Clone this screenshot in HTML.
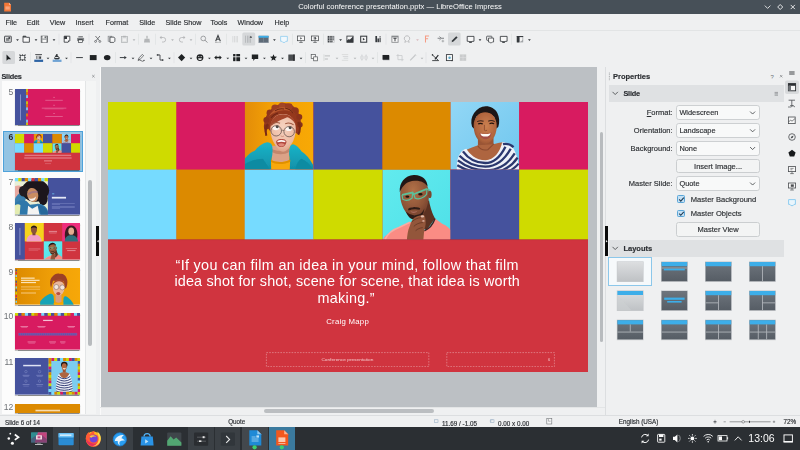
<!DOCTYPE html>
<html>
<head>
<meta charset="utf-8">
<title>Colorful conference presentation.pptx — LibreOffice Impress</title>
<style>
*{box-sizing:border-box;margin:0;padding:0}
html,body{width:800px;height:450px;overflow:hidden;background:#eff0f1;font-family:"Liberation Sans",sans-serif;color:#2c2f33;font-size:7px}
.a{position:absolute;white-space:nowrap}
.t{position:absolute;white-space:nowrap;line-height:10px;height:10px}
.b{font-weight:bold}
.t,.lb,.dt,.bt,.n,.a{opacity:.999}
.t,.lb,.dt,.bt{-webkit-text-stroke-width:0.16px}
#ov{position:absolute;left:0;top:0;width:800px;height:450px}
.dd{position:absolute;left:676.4px;width:83.4px;height:15.100px;background:#f8f9f9;border:0.8px solid #cdd0d2;border-radius:2.800px}
.bt{position:absolute;left:676.4px;width:83.4px;height:14.700px;background:#f3f4f4;border:0.8px solid #cbced0;border-radius:2.500px;text-align:center;line-height:13.700px;font-size:7.5px}
.lb{position:absolute;width:70px;left:602.6px;text-align:right;line-height:10px;height:10px;font-size:7.5px}
.dt{position:absolute;left:679.4px;line-height:10px;height:10px;font-size:7.4px}
.th{position:absolute;left:14.7px;width:65.5px;height:37px;box-shadow:0 0.6px 1px rgba(0,0,0,.45)}
.n{position:absolute;width:13.4px;left:0;text-align:right;font-size:8.6px;line-height:9px;color:#6e7276}
</style>
</head>
<body>
<div class="a" style="left:0;top:0;width:800px;height:14.2px;background:#475058"></div>
<div class="a" style="left:250px;top:0;width:300px;height:14px;line-height:14px;text-align:center;color:#fcfcfc;font-size:7.6px">Colorful conference presentation.pptx — LibreOffice Impress</div>
<div class="t" style="left:5.5px;top:18.4px;font-size:7.2px">File</div>
<div class="t" style="left:26.8px;top:18.4px;font-size:7.2px">Edit</div>
<div class="t" style="left:49.8px;top:18.4px;font-size:7.2px">View</div>
<div class="t" style="left:75.6px;top:18.4px;font-size:7.2px">Insert</div>
<div class="t" style="left:105.5px;top:18.4px;font-size:7.2px">Format</div>
<div class="t" style="left:139.2px;top:18.4px;font-size:7.2px">Slide</div>
<div class="t" style="left:165.5px;top:18.4px;font-size:7.2px">Slide Show</div>
<div class="t" style="left:210.5px;top:18.4px;font-size:7.2px">Tools</div>
<div class="t" style="left:237.5px;top:18.4px;font-size:7.2px">Window</div>
<div class="t" style="left:274.5px;top:18.4px;font-size:7.2px">Help</div>
<div class="a" style="left:0;top:30.2px;width:800px;height:0.7px;background:#e2e4e5"></div>
<div class="t b" style="left:1.5px;top:72px;font-size:7.3px;letter-spacing:-0.25px">Slides</div>
<div class="a" style="left:2px;top:80.6px;width:83px;height:333px;background:#fcfcfc"></div>
<div class="a" style="left:85px;top:80.6px;width:11px;height:333px;background:#f4f5f5;border-left:0.7px solid #e3e5e6"></div>
<div class="a" style="left:87.6px;top:180px;width:4.8px;height:166px;background:#b8bbbe;border-radius:2px"></div>
<div class="a" style="left:3.2px;top:131.4px;width:79.4px;height:40.7px;background:#93c4e3;border:0.9px solid #4ea2da"></div>
<div class="n" style="top:87.9px;color:#6e7276">5</div>
<div class="th" style="top:88.5px;height:36.8px;overflow:hidden"><svg width="65.5" height="36.800" style="display:block"><use href="#s5" width="65.5" height="36.800"/></svg></div>
<div class="n" style="top:133px;color:#2c2f33;font-weight:bold">6</div>
<div class="th" style="top:133.6px;height:36.8px;overflow:hidden"><svg width="65.5" height="36.800" style="display:block"><use href="#s6" width="65.5" height="36.800"/><rect x="9.600" y="20.700" width="46.600" height="1.400" fill="#e27680"/><rect x="9.200" y="23.300" width="47.400" height="1.400" fill="#e27680"/><rect x="29" y="26.200" width="8" height="1.300" fill="#e27680"/><rect x="30" y="29.200" width="6" height="0.900" fill="#da5f6a"/></svg></div>
<div class="n" style="top:177.7px;color:#6e7276">7</div>
<div class="th" style="top:178.3px;height:36.8px;overflow:hidden"><svg width="65.5" height="36.800" style="display:block"><use href="#s7" width="65.5" height="36.800"/></svg></div>
<div class="n" style="top:222.7px;color:#6e7276">8</div>
<div class="th" style="top:223.3px;height:36.8px;overflow:hidden"><svg width="65.5" height="36.800" style="display:block"><use href="#s8" width="65.5" height="36.800"/></svg></div>
<div class="n" style="top:267.7px;color:#6e7276">9</div>
<div class="th" style="top:268.3px;height:36.8px;overflow:hidden"><svg width="65.5" height="36.800" style="display:block"><use href="#s9" width="65.5" height="36.800"/></svg></div>
<div class="n" style="top:312.2px;color:#6e7276">10</div>
<div class="th" style="top:312.8px;height:36.8px;overflow:hidden"><svg width="65.5" height="36.800" style="display:block"><use href="#s10" width="65.5" height="36.800"/></svg></div>
<div class="n" style="top:357.6px;color:#6e7276">11</div>
<div class="th" style="top:358.2px;height:36.8px;overflow:hidden"><svg width="65.5" height="36.800" style="display:block"><use href="#s11" width="65.5" height="36.800"/></svg></div>
<div class="n" style="top:403.4px;color:#6e7276">12</div>
<div class="th" style="top:404px;height:9.4px;overflow:hidden"><svg width="65.5" height="36.800" style="display:block"><use href="#s12" width="65.5" height="36.800"/></svg></div>
<div class="a" style="left:100.9px;top:67.2px;width:495.9px;height:339.6px;background:#bcc0c4"></div>
<div class="a" style="left:99.8px;top:67.2px;width:1.100px;height:348px;background:#fafafa"></div>
<svg class="a" style="left:107.6px;top:101.5px" width="480.4" height="270.100"><use href="#s6" width="480.4" height="270.100"/></svg>
<svg class="a" style="left:107.8px;top:101.6px" width="480" height="269.6" font-family="Liberation Sans, sans-serif" fill="#fff"><text x="67.6" y="168.2" font-size="14.4" textLength="343" lengthAdjust="spacing">“If you can film an idea in your mind, follow that film</text><text x="66.4" y="184.4" font-size="14.4" textLength="345.4" lengthAdjust="spacing">idea shot for shot, scene for scene, that idea is worth</text><text x="209.6" y="200.6" font-size="14.4" textLength="57" lengthAdjust="spacing">making.”</text><text x="218.2" y="221.6" font-size="7.8" textLength="42.6" lengthAdjust="spacing">Craig Mapp</text><rect x="158.4" y="250.6" width="162.4" height="14" fill="none" stroke="#e9a3a8" stroke-width="0.6" stroke-dasharray="1.6 1.2"/><rect x="338.8" y="250.6" width="107.6" height="14" fill="none" stroke="#e9a3a8" stroke-width="0.6" stroke-dasharray="1.6 1.2"/><text x="213.4" y="258.8" font-size="4" fill="#f3c8cb" textLength="52" lengthAdjust="spacingAndGlyphs">Conference presentation</text><text x="440" y="258.8" font-size="4" fill="#f3c8cb">6</text></svg>
<div class="a" style="left:599.6px;top:132.2px;width:3.2px;height:210px;background:#b8bbbe;border-radius:2px"></div>
<div class="a" style="left:264px;top:408.8px;width:170.400px;height:4.700px;background:#bbbec1;border-radius:2.400px"></div>
<div class="a" style="left:100px;top:407.4px;width:505px;height:0.7px;background:#e3e5e6"></div>
<div class="a" style="left:604.8px;top:67px;width:0.8px;height:348px;background:#dcdee0"></div>
<div class="a" style="left:96.4px;top:226.4px;width:3px;height:29.6px;background:#0b0b0b"></div>
<div class="a" style="left:605.2px;top:226.4px;width:2.8px;height:29.6px;background:#0b0b0b"></div>
<div class="t b" style="left:613px;top:72.4px;font-size:7.5px">Properties</div>
<div class="a" style="left:608.8px;top:85.2px;width:175px;height:16.4px;background:#dfe1e3"></div>
<div class="t b" style="left:623.4px;top:89.2px;font-size:7.3px;letter-spacing:-0.2px">Slide</div>
<div class="a" style="left:608.8px;top:240.2px;width:175px;height:16.4px;background:#dfe1e3"></div>
<div class="t b" style="left:623.4px;top:244.2px;font-size:7.5px">Layouts</div>
<div class="lb" style="top:108.3px"><u>F</u>ormat:</div>
<div class="dd" style="top:105.2px"></div>
<div class="dt" style="top:108.3px">Widescreen</div>
<div class="lb" style="top:126.1px">Orientation:</div>
<div class="dd" style="top:123px"></div>
<div class="dt" style="top:126.1px">Landscape</div>
<div class="lb" style="top:143.8px">Background:</div>
<div class="dd" style="top:140.7px"></div>
<div class="dt" style="top:143.8px">None</div>
<div class="bt" style="top:158.8px">Insert Image...</div>
<div class="lb" style="top:179.3px">Master Slide:</div>
<div class="dd" style="top:176.2px"></div>
<div class="dt" style="top:179.3px">Quote</div>
<div class="bt" style="top:222.300px">Master View</div>
<div class="a" style="left:677.4px;top:195.4px;width:7.8px;height:7.8px;background:#c4e0f4;border:0.8px solid #5aa6d8;border-radius:1.4px"></div>
<div class="t" style="left:690.8px;top:194.6px;font-size:7.55px">Master Background</div>
<div class="a" style="left:677.4px;top:209.6px;width:7.8px;height:7.8px;background:#c4e0f4;border:0.8px solid #5aa6d8;border-radius:1.4px"></div>
<div class="t" style="left:690.8px;top:208.8px;font-size:7.55px">Master Objects</div>
<div class="a" style="left:608.4px;top:256.6px;width:44px;height:29px;background:#f6f9fb;border:0.8px solid #8cc7ea"></div>
<div class="a" style="left:0;top:415.2px;width:800px;height:0.7px;background:#dcdee0"></div>
<div class="t" style="left:5px;top:417.5px;font-size:6.3px">Slide 6 of 14</div>
<div class="t" style="left:228.2px;top:417.4px;font-size:6.3px">Quote</div>
<div class="t" style="left:442px;top:418.9px;font-size:6.3px">11.69 / -1.05</div>
<div class="t" style="left:498px;top:418.9px;font-size:6.3px">0.00 x 0.00</div>
<div class="t" style="left:618.8px;top:417.2px;font-size:6.3px">English (USA)</div>
<div class="t" style="left:783.4px;top:417.2px;font-size:6.3px">72%</div>
<div class="a" style="left:0;top:427px;width:800px;height:23px;background:#2b2f33"></div>
<div class="a" style="left:53px;top:427px;width:26.4px;height:23px;background:#3b4045"></div>
<div class="a" style="left:80px;top:427px;width:26.2px;height:23px;background:#3b4045"></div>
<div class="a" style="left:106.8px;top:427px;width:25.8px;height:23px;background:#3b4045"></div>
<div class="a" style="left:188px;top:427px;width:25.6px;height:23px;background:#3b4045"></div>
<div class="a" style="left:214.6px;top:427px;width:25.8px;height:23px;background:#3b4045"></div>
<div class="a" style="left:241.6px;top:427px;width:26.4px;height:23px;background:#43484d"></div>
<div class="a" style="left:269px;top:427px;width:26.2px;height:23px;background:#3b7a9e"></div>
<div class="t" style="left:748.300px;top:431.8px;font-size:10.5px;line-height:13px;height:13px;color:#fcfcfc;-webkit-text-stroke-width:0">13:06</div>
<svg id="ov" viewBox="0 0 800 450">
<defs>
<linearGradient id="gBlank" x1="0" x2="0" y1="0" y2="1"><stop offset="0" stop-color="#dcdee0"/><stop offset="1" stop-color="#bfc2c5"/></linearGradient>
<linearGradient id="gDark" x1="0" x2="0" y1="0" y2="1"><stop offset="0" stop-color="#6e757d"/><stop offset="1" stop-color="#565d65"/></linearGradient>
<linearGradient id="gOr9" x1="0" x2="1" y1="0" y2="0"><stop offset="0" stop-color="#dc8a00"/><stop offset="0.6" stop-color="#f0a008"/><stop offset="1" stop-color="#f7a808"/></linearGradient>
<filter id="bl7" x="-5%" y="-5%" width="110%" height="110%"><feGaussianBlur stdDeviation="3"/></filter>

<filter id="bl" x="-10%" y="-10%" width="120%" height="120%"><feGaussianBlur stdDeviation="0.55"/></filter>
<filter id="bl2" x="-10%" y="-10%" width="120%" height="120%"><feGaussianBlur stdDeviation="1.1"/></filter>
<linearGradient id="gOr" x1="0" x2="1" y1="0" y2="0"><stop offset="0" stop-color="#e38c08"/><stop offset="0.35" stop-color="#f29f06"/><stop offset="1" stop-color="#f8a905"/></linearGradient>
<linearGradient id="gBl" x1="0" x2="1" y1="0" y2="1"><stop offset="0" stop-color="#92d7f6"/><stop offset="1" stop-color="#6fc6ee"/></linearGradient>
<linearGradient id="gCy" x1="0" x2="1" y1="0" y2="1"><stop offset="0" stop-color="#62ebee"/><stop offset="1" stop-color="#4fe0e8"/></linearGradient>
<linearGradient id="gTeal" x1="0" x2="0" y1="0" y2="1"><stop offset="0" stop-color="#1cb4c8"/><stop offset="1" stop-color="#1090a8"/></linearGradient>
<radialGradient id="gSk1" cx="0.5" cy="0.35" r="0.7"><stop offset="0" stop-color="#f6d2c0"/><stop offset="0.7" stop-color="#ecbba3"/><stop offset="1" stop-color="#d99c82"/></radialGradient>
<radialGradient id="gSk2" cx="0.55" cy="0.45" r="0.65"><stop offset="0" stop-color="#cb8050"/><stop offset="0.7" stop-color="#b0643d"/><stop offset="1" stop-color="#8a4a2e"/></radialGradient>
<radialGradient id="gSk3" cx="0.45" cy="0.3" r="0.75"><stop offset="0" stop-color="#b27148"/><stop offset="0.6" stop-color="#8f5538"/><stop offset="1" stop-color="#6a3a28"/></radialGradient>
<symbol id="ph1" viewBox="0 0 68 68" preserveAspectRatio="none">
<rect width="68" height="68" fill="url(#gOr)"/>
<g filter="url(#bl)">
<path d="M21 33c-2 -4 -2.5 -9 -1.5 -13c0.6 -4 2.5 -8 5.5 -11c3 -4 8 -7 13 -7.6c5 -0.6 9 1 12 5c3 3 5 8 5.6 13c0.4 5 -0.6 10 -2.6 13l-4 -2l-1 -14l-24 -1z" fill="#95391f"/>
<ellipse cx="37.6" cy="19" rx="16.4" ry="15.6" fill="#95391f"/>
<circle cx="25" cy="11" r="3.4" fill="#8f361d"/><circle cx="30" cy="6" r="3.6" fill="#9b3e22"/><circle cx="37" cy="3.800" r="3.400" fill="#a34526"/><circle cx="44" cy="4.600" r="3.400" fill="#9b3e22"/><circle cx="50" cy="9" r="3.600" fill="#8f361d"/><circle cx="54" cy="15" r="3" fill="#8a331b"/><circle cx="21.500" cy="18" r="3" fill="#8a331b"/><circle cx="21.600" cy="25" r="2.600" fill="#84301a"/><circle cx="54.600" cy="23" r="2.800" fill="#84301a"/>
<path d="M24 14c3 -5 8 -8.600 14 -9c5 0 9 3 11.600 7c-3 -2.600 -7 -4 -11 -3.600c-6 0.400 -10 2.400 -14.600 5.600z" fill="#b9582e"/>
<path d="M30 9q4 -3 9 -2M40 6q5 1 8 5M26 16q3 -4 7 -5" stroke="#6e2713" stroke-width="1" fill="none"/>
<path d="M23 22c-2 3 -2.6 8 -1.6 12M53 20c2 4 2 9 0 13" stroke="#7a2c16" stroke-width="2" fill="none"/>
<path d="M27 44h17v15c-4 3 -13 3 -17 0z" fill="#dba287"/>
<path d="M27 47c4 3 12 3 17 -0.6v4c-5 3 -12 3 -17 0z" fill="#c4866c"/>
<path d="M25.4 27c0 -9 5 -15 12.6 -15c7.6 0 12.6 6 12.6 15c0 6 -1.6 11.6 -4.6 16c-2.4 4 -5 7 -8 7c-3 0 -5.6 -3 -8 -7c-3 -4.4 -4.600 -10 -4.600 -16z" fill="url(#gSk1)"/>
<path d="M25 25c1 -8 6 -12.600 13 -12.600c7 0 12 4 13 11.600c-2 -5 -6 -8 -9 -8.600c-4 2 -10 3.600 -17 9.600z" fill="#a3452a"/>
<ellipse cx="30.8" cy="26" rx="3.3" ry="2.4" fill="#fbf6f3"/><ellipse cx="43.6" cy="26.8" rx="3.2" ry="2.4" fill="#fbf6f3"/>
<circle cx="32.2" cy="25" r="1.5" fill="#4a4744"/><circle cx="45" cy="25.8" r="1.5" fill="#4a4744"/>
<path d="M26.600 22.600q4 -3 8.400 -1.200M40 22q4.400 -2 8.400 1" stroke="#a05a40" stroke-width="1" fill="none"/>
<circle cx="31.2" cy="29" r="5.2" fill="none" stroke="#6a564f" stroke-width="0.8"/><circle cx="44" cy="29.8" r="5.2" fill="none" stroke="#6a564f" stroke-width="0.8"/>
<path d="M36.4 28.800q1.200 -0.800 2.400 0" stroke="#6a564f" stroke-width="0.7" fill="none"/>
<path d="M35.600 34q1.400 1.400 3.400 0.200" stroke="#cf927a" stroke-width="0.9" fill="none"/>
<path d="M31 40c1 -2.200 3 -3 5.200 -2.600c2.200 -0.400 4.200 0.400 5.200 2.400c-0.400 3.200 -2.400 5.600 -5.200 5.600c-2.800 0 -4.800 -2.400 -5.200 -5.400z" fill="#b24a3f"/>
<path d="M32.200 39.200q4 -1.800 8.200 0l-0.400 1.400q-3.600 -1 -7.400 0z" fill="#fdf8f5"/>
<path d="M33 42.400q3.200 -1.600 6.600 0q-1 2.400 -3.300 2.400q-2.300 0 -3.300 -2.400z" fill="#e08a7c"/>
<path d="M0 57c3 -4 7 -7 10 -8c3 -4 8 -7.600 12 -8.400c3 0 4.600 1.400 5.200 3.600c0.800 4 0.400 9 -0.800 13.800l1.200 10h-27.600z" fill="url(#gTeal)"/>
<path d="M0 68v-5c6 -4 12 -6 18 -6l7 11z" fill="#0e8ba2"/>
<path d="M44 68l0.400 -12c-0.800 -4 -0.600 -8 0.400 -10.800c1 -2.600 3 -3.200 5 -2c3 1.600 5 4 6.600 6.600c4 2.600 8 7 11.600 14v4.200z" fill="url(#gTeal)"/>
<path d="M50 68c1 -5 3 -9 6 -11c5 2 9 6 12 11z" fill="#0e8ba2"/>
<path d="M26.200 68l-0.200 -9.600c5 2.600 13 2.600 19 -0.400l-0.400 10z" fill="#f8a808"/>
<path d="M26 58.400c5 2.600 13 2.600 19 -0.400v2c-6 3 -14 3 -19 0.400z" fill="#e09000"/>
</g>
</symbol>
<symbol id="ph2" viewBox="0 0 68 68" preserveAspectRatio="none">
<rect width="68" height="68" fill="url(#gBl)"/>
<g filter="url(#bl)">
<path d="M21.400 25c-1.400 -5 -0.800 -10 2 -14c3 -4 7 -6.400 11.600 -6.600c5 0 9 2.400 11.400 6.600c2 4 2.400 9 1 14l-2 2l-2 -13l-18 0l-2 13z" fill="#1f1513"/>
<path d="M27.200 36h15.400v12h-15.400z" fill="#9a5535"/>
<path d="M23 24c0 -8.400 4.600 -14.200 11.400 -14.200c6.800 0 11.400 5.800 11.400 14.200c0 6 -1.600 10.600 -4.400 14c-2 2.600 -4.400 4.200 -7 4.200c-2.600 0 -5 -1.600 -7 -4.200c-2.800 -3.400 -4.400 -8 -4.400 -14z" fill="url(#gSk2)"/>
<path d="M22.600 21c0.600 -7.600 5 -12 11.800 -12c6.800 0 11 4.400 11.800 11.600c-2 -6.400 -5.600 -10.200 -11.800 -10.200c-6.200 0 -9.800 4 -11.800 10.600z" fill="#1f1513"/>
<path d="M26.400 19.800q3.200 -1.800 6.400 -0.400M37.400 19.400q3.200 -1.600 6.400 0.400" stroke="#3a221a" stroke-width="1" fill="none"/>
<path d="M27.400 22.200q2.200 -1.400 4.600 0M38.600 22q2.200 -1.400 4.600 0" stroke="#24140f" stroke-width="1.100" fill="none"/>
<path d="M33.600 23v5.400q1.200 1 2.600 0" stroke="#8a4a2e" stroke-width="0.800" fill="none"/>
<path d="M28.600 31.200q6 1.800 12.200 -0.200q-0.800 6.400 -6 6.400q-5.400 0 -6.200 -6.200z" fill="#a44f45"/>
<path d="M29.600 31.600q5.200 1.400 10.200 -0.200q-0.800 3.400 -5 3.400q-4.400 0 -5.200 -3.200z" fill="#fefaf7"/>
<path d="M14 49c5 -2.600 10 -4.600 13.400 -5.600l15 -1c4 -1 8 -2 10 -2l0 8l-10 12h-20z" fill="#ae6540"/>
<path d="M27 44c2 3 6 5 10 4l6 -6" stroke="#8a4a2e" stroke-width="1" fill="none"/>
<path d="M6.400 68c-0.400 -6 0.400 -12 3 -16c2 -3 4 -4.400 6.400 -5c3 5 9 11.600 19 11.600c8 0 14.400 -8 16.400 -18c3 -0.400 6 0.600 8.600 3c4 4 7 12 8.200 24.400z" fill="#eef1f8"/>
<g fill="none" stroke="#2c376e" stroke-width="2.300">
<path d="M12.400 49.600q8 11.400 22 11.800q12 0 20 -16.400"/>
<path d="M9 54q10 10.600 25.600 11q15 0 25 -18"/>
<path d="M7.400 58.800q12 9.600 27.600 10q18 0 28.600 -17"/>
<path d="M6.800 63.600q8 5 16 6.400M48 70q12 -4 18.400 -14"/>
<path d="M57 70q7 -3.400 10.400 -8"/>
<path d="M52 42.400q6 -1.400 10.400 3"/>
</g>
</g>
</symbol>
<symbol id="ph3" viewBox="0 0 68 68" preserveAspectRatio="none">
<rect width="68" height="68" fill="url(#gCy)"/>
<g filter="url(#bl)">
<path d="M40 34l6.600 -4c1.400 8 3.400 13 6 17.600l-7.600 10.400h-6z" fill="#5c3222"/>
<path d="M0 70c0.600 -3 2 -5 4.600 -6.600l12 -7l12 -5.400c4 4 10 6 14 8c4 -2 8 -6 10 -11.400l7.600 5.400c4 1.600 7 4 7.800 6v11z" fill="#fa8c84"/>
<path d="M2.600 68c3 -6 9 -10 14 -11.600l11 -5" stroke="#fcaaa2" stroke-width="1.600" fill="none"/>
<path d="M52.600 47.600c-2 6 -6 10 -10.600 12" stroke="#3a2626" stroke-width="1.400" fill="none"/>
<path d="M17.800 25c-0.600 -9 5 -16 14 -16.400c8 -0.400 14 5 14.600 13c0.400 5 -0.200 10 -1.800 14.600c-1.600 5 -4.600 9 -8 11c-2.600 1.400 -6 1.200 -8.600 -0.800c-3.600 -2.800 -6.600 -7 -8.400 -12c-1 -3 -1.600 -6 -1.800 -9.400z" fill="url(#gSk3)"/>
<ellipse cx="47.400" cy="24.200" rx="1.800" ry="3.600" fill="#7a462f"/>
<path d="M17.400 22c-0.800 -9 5 -16 14 -16.600c8 -0.400 13.600 4.600 13.800 11.200c-3 -4 -7 -6 -13.200 -5.600c-7 0.400 -11.400 4 -14.600 11z" fill="#241714"/>
<path d="M25.600 38.400q2 -1.600 4.400 -1.400q1.600 -0.800 3.200 -0.200q2.400 -0.400 4.600 1l-0.600 1.400q-5.400 -1.400 -11 0.600z" fill="#2e1c17"/>
<path d="M28 40.400q3.200 1.400 7 -0.200q-0.600 2 -3.400 2.200q-2.800 0.200 -3.600 -2z" fill="#a86a5c"/>
<path d="M23.600 41c1.400 4 4 7 8 7.600c4 0.400 7.600 -2 9.600 -7l0.800 -4c-1 3 -3 5 -5 6l-5 1.200l-5 -1.400z" fill="#2e1c17"/>
<path d="M19.600 24.600l10.600 -2.200l1 1.600l13.400 -5.200" fill="none" stroke="#5cc09a" stroke-width="1.700"/>
<path d="M19.600 24.600l0.800 4.400c2.400 1.400 6.400 1 9.400 -1.400l0.400 -5.200" fill="none" stroke="#5cc09a" stroke-width="1.200"/>
<path d="M31.400 23.800l1.200 4c3.400 1.600 9 0 11.600 -3.600l0.400 -5.400" fill="none" stroke="#5cc09a" stroke-width="1.200"/>
<path d="M44.600 18.800l3.400 1.600" stroke="#5cc09a" stroke-width="1.300"/>
<ellipse cx="25" cy="26.400" rx="2" ry="1.100" fill="#1e1310"/><ellipse cx="38" cy="24" rx="2.200" ry="1.200" fill="#1e1310"/>
<path d="M24.400 70c0.400 -6 1 -11 3 -15c1 -3 2 -6 4.400 -8c2.400 -1.600 5 -2.400 7.600 -2.600c2.600 -0.200 3.600 1 3.400 2.600c1 4 0.600 8 -1 12l-1 11z" fill="#93573a"/>
<path d="M29.600 51c2.400 -2.600 5.600 -4 9 -4M31.400 55.400c2.400 -2.400 5.400 -3.600 9 -3.800M33.200 59.600c2 -1.800 4.400 -2.800 7.200 -3" stroke="#6a3a28" stroke-width="0.900" fill="none"/>
<ellipse cx="40" cy="45.600" rx="1.800" ry="1.200" fill="#e6c0b0"/><ellipse cx="41" cy="50" rx="1.200" ry="0.900" fill="#d8a898"/>
</g>
</symbol>

<symbol id="ph1w" viewBox="0 0 68 68" preserveAspectRatio="none">
<path d="M22 30c-3 -8 -3 -18 3 -23c4 -5 10 -7 15 -5c6 -1 11 3 13 8c3 5 2 13 0 19c-1 3 -3 3 -4 0l-1 -12l-22 -1z" fill="#9c4126"/>
<path d="M31 44h12v14c-3 3 -9 3 -12 0z" fill="#d99d80"/>
<ellipse cx="37.2" cy="30" rx="11.6" ry="15.5" fill="#e9b79c"/>
<path d="M26 24c2 -8 8 -11 13 -11c6 0 9 4 10 10c-3 -4 -7 -6 -11 -6c-5 0 -9 3 -12 7z" fill="#a84a2a"/>
<circle cx="32.6" cy="28.4" r="5" fill="#f3e6de" stroke="#5a463f" stroke-width="0.8"/><circle cx="44.6" cy="29.2" r="5" fill="#f3e6de" stroke="#5a463f" stroke-width="0.8"/>
<ellipse cx="36.6" cy="41.6" rx="4.2" ry="3.2" fill="#b9503f"/>
<path d="M-6 68c4 -12 16 -22 26 -26c4 -1 6 1 7 5l2 21z" fill="#17a3b6"/>
<path d="M46 68l1 -17c1 -4 4 -5 7 -3c6 4 11 10 14 17v3z" fill="#17a3b6"/>
<path d="M28 68l-1 -8c6 2 14 2 20 -1l-1 9z" fill="#f6a800"/>
</symbol>
<symbol id="s6" viewBox="0 0 480.4 269.8" preserveAspectRatio="none"><rect width="480.4" height="269.8" fill="#d0343f"/><rect y="137" width="480.4" height="0.9" fill="#b52a35"/><rect x="0" y="0" width="68.6" height="67.8" fill="#cfdb00"/><rect x="68.4" y="0" width="68.5" height="67.8" fill="#d81b60"/><rect x="205.4" y="0" width="69.2" height="67.8" fill="#45529d"/><rect x="274.4" y="0" width="68.2" height="67.8" fill="#dc8a00"/><rect x="411.2" y="0" width="69.4" height="67.8" fill="#d81b60"/><rect x="0" y="67.5" width="68.6" height="69.7" fill="#76dbff"/><rect x="68.4" y="67.5" width="68.5" height="69.7" fill="#dc8a00"/><rect x="136.7" y="67.5" width="68.9" height="69.7" fill="#76dbff"/><rect x="205.4" y="67.5" width="69.2" height="69.7" fill="#cfdb00"/><rect x="342.4" y="67.5" width="69" height="69.7" fill="#45529d"/><rect x="411.2" y="67.5" width="69.4" height="69.7" fill="#cfdb00"/><use href="#ph1" x="136.7" y="0" width="68.7" height="67.5"/><use href="#ph2" x="342.4" y="0" width="68.8" height="67.5"/><use href="#ph3" x="274.4" y="67.5" width="68" height="69.7"/></symbol>
<symbol id="s5" viewBox="0 0 480 270" preserveAspectRatio="none"><rect width="480" height="270" fill="#d81b60"/><rect width="82" height="270" fill="#45529d"/><rect x="82" y="0" width="12" height="22.5" fill="#cfdb00"/><rect x="82" y="22.5" width="12" height="22.5" fill="#dc8a00"/><rect x="82" y="45" width="12" height="22.5" fill="#76dbff"/><rect x="82" y="67.5" width="12" height="22.5" fill="#d81b60"/><rect x="82" y="90" width="12" height="22.5" fill="#cfdb00"/><rect x="82" y="112.5" width="12" height="22.5" fill="#dc8a00"/><rect x="82" y="135" width="12" height="22.5" fill="#76dbff"/><rect x="82" y="157.5" width="12" height="22.5" fill="#45529d"/><rect x="82" y="180" width="12" height="22.5" fill="#dc8a00"/><rect x="82" y="202.5" width="12" height="22.5" fill="#d81b60"/><rect x="82" y="225" width="12" height="22.5" fill="#76dbff"/><rect x="82" y="247.5" width="12" height="22.5" fill="#cfdb00"/><rect x="37" y="40" width="6" height="190" fill="#aab1e0" opacity="0.8"/><rect x="283" y="58" width="6" height="6" fill="#f3b9cd"/><rect x="283" y="116" width="6" height="6" fill="#f3b9cd"/><rect x="283" y="176" width="6" height="6" fill="#f3b9cd"/><rect x="222" y="80" width="128" height="4" fill="#ea8db0"/><rect x="196" y="138" width="180" height="4" fill="#ea8db0"/><rect x="216" y="145" width="140" height="3" fill="#e676a0"/><rect x="222" y="198" width="128" height="4" fill="#ea8db0"/></symbol><symbol id="s7" viewBox="0 0 480 270" preserveAspectRatio="none"><rect width="480" height="270" fill="#45529d"/><g filter="url(#bl7)"><rect width="241" height="270" fill="#e9efd6"/><path d="M0 60c20 -10 40 -6 56 6l10 30l-30 40l-36 10z" fill="#e8a9a0"/><path d="M0 150c10 -20 30 -44 60 -50l30 20l-20 60l-70 40z" fill="#3a7fae"/><ellipse cx="150" cy="92" rx="100" ry="82" fill="#1c181b"/><ellipse cx="64" cy="96" rx="36" ry="40" fill="#231e20"/><ellipse cx="206" cy="150" rx="34" ry="50" fill="#1c181b"/><ellipse cx="130" cy="124" rx="40" ry="52" fill="#c98c62" transform="rotate(-16 130 124)"/><path d="M92 112q36 -26 76 -16l-2 14q-34 -8 -68 16z" fill="#8a6a9a" opacity="0.55"/><path d="M100 146q26 18 54 -10q-4 30 -28 32q-20 0 -26 -22z" fill="#f7efea"/><path d="M0 270v-84c24 -22 60 -30 86 -16l24 26l50 -6c40 -4 70 20 81 50v30z" fill="#2f78aa"/><path d="M0 270v-70c14 -10 30 -10 40 0l-6 70z" fill="#e3ebb0"/><path d="M96 204l30 22l40 -22l14 66h-90z" fill="#f4f4f2"/><path d="M170 200c30 0 56 20 71 50v20h-50z" fill="#27689a"/></g><rect x="0" y="0" width="24.4" height="24" fill="#76dbff"/><rect x="24.1" y="0" width="24.4" height="24" fill="#cfdb00"/><rect x="48.2" y="0" width="24.4" height="24" fill="#45529d"/><rect x="72.3" y="0" width="24.4" height="24" fill="#dc8a00"/><rect x="96.4" y="0" width="24.4" height="24" fill="#76dbff"/><rect x="120.5" y="0" width="24.4" height="24" fill="#d0343f"/><rect x="144.6" y="0" width="24.4" height="24" fill="#45529d"/><rect x="168.7" y="0" width="24.4" height="24" fill="#dc8a00"/><rect x="192.8" y="0" width="24.4" height="24" fill="#76dbff"/><rect x="216.9" y="0" width="24.4" height="24" fill="#cfdb00"/><rect x="272" y="114" width="16" height="5" fill="#76dbff"/><rect x="270" y="138" width="104" height="13" fill="#e6e9f6"/><rect x="270" y="186" width="168" height="3.6" fill="#7f8ac8"/><rect x="270" y="194" width="60" height="3.6" fill="#7f8ac8"/><rect x="270" y="206" width="168" height="3.6" fill="#7f8ac8"/><rect x="270" y="214" width="168" height="3.6" fill="#7f8ac8"/><rect x="270" y="222" width="60" height="3.6" fill="#7f8ac8"/></symbol><symbol id="s8" viewBox="0 0 480 270" preserveAspectRatio="none"><rect width="480" height="270" fill="#d0343f"/><rect width="72" height="270" fill="#45529d"/><rect x="33" y="36" width="6" height="200" fill="#aab1e0" opacity="0.800"/><g filter="url(#bl7)"><rect x="72" y="0" width="139" height="135" fill="#f5d21c"/><path d="M84 135c2 -34 22 -52 54 -52c32 0 54 18 58 52z" fill="#f2a0c4"/><rect x="128" y="66" width="22" height="24" fill="#7a4730"/><ellipse cx="139" cy="48" rx="22" ry="29" fill="#8a5338"/><path d="M116 42c-2 -30 48 -30 46 0c-10 -12 -36 -12 -46 0z" fill="#231815"/></g><g filter="url(#bl7)"><rect x="346" y="0" width="134" height="135" fill="#ee2f7c"/><path d="M372 128c-18 -56 0 -110 40 -110c42 0 54 54 40 110z" fill="#3a1d22"/><ellipse cx="412" cy="60" rx="21" ry="27" fill="#e6ad90"/><path d="M364 135c2 -32 20 -46 48 -46c28 0 46 14 50 46z" fill="#2f6f7c"/></g><rect x="211" y="135" width="135" height="135" fill="#4fe0e8"/><use href="#ph3" x="211" y="135" width="135" height="135"/><rect x="248" y="58" width="60" height="11" fill="#e27f89"/><rect x="252" y="76" width="52" height="4" fill="#dc6670"/><rect x="100" y="188" width="86" height="5" fill="#e48993"/><rect x="100" y="200" width="70" height="4" fill="#dc6670"/><rect x="372" y="186" width="82" height="5" fill="#e48993"/><rect x="382" y="198" width="62" height="8" fill="#e27f89"/></symbol><symbol id="s9" viewBox="0 0 480 270" preserveAspectRatio="none"><rect width="480" height="270" fill="url(#gOr9)"/><rect x="4" y="10" width="10" height="14" fill="#45529d"/><rect x="4" y="31" width="10" height="14" fill="#d81b60"/><rect x="4" y="52" width="10" height="14" fill="#76dbff"/><rect x="4" y="73" width="10" height="14" fill="#cfdb00"/><rect x="4" y="94" width="10" height="14" fill="#45529d"/><rect x="4" y="115" width="10" height="14" fill="#d81b60"/><rect x="4" y="136" width="10" height="14" fill="#76dbff"/><rect x="4" y="157" width="10" height="14" fill="#45529d"/><rect x="4" y="178" width="10" height="14" fill="#cfdb00"/><rect x="4" y="199" width="10" height="14" fill="#d81b60"/><rect x="4" y="220" width="10" height="14" fill="#45529d"/><rect x="4" y="241" width="10" height="14" fill="#76dbff"/><rect x="44" y="70" width="100" height="9" fill="#fbe3b8"/><rect x="44" y="86" width="136" height="9" fill="#fbe3b8"/><rect x="44" y="102" width="110" height="9" fill="#fbe3b8"/><rect x="44" y="134" width="140" height="4" fill="#f5c676"/><rect x="44" y="144" width="140" height="4" fill="#f5c676"/><rect x="44" y="154" width="140" height="4" fill="#f5c676"/><rect x="44" y="176" width="110" height="4" fill="#f5c676"/><rect x="44" y="186" width="110" height="4" fill="#f5c676"/><use href="#ph1w" x="184" y="36" width="248" height="248"/></symbol><symbol id="s10" viewBox="0 0 480 270" preserveAspectRatio="none"><rect width="480" height="270" fill="#d81b60"/><rect x="0" y="0" width="24" height="20" fill="#cfdb00"/><rect x="24" y="0" width="24" height="20" fill="#45529d"/><rect x="48" y="0" width="24" height="20" fill="#dc8a00"/><rect x="72" y="0" width="24" height="20" fill="#76dbff"/><rect x="96" y="0" width="24" height="20" fill="#45529d"/><rect x="120" y="0" width="24" height="20" fill="#cfdb00"/><rect x="144" y="0" width="24" height="20" fill="#dc8a00"/><rect x="168" y="0" width="24" height="20" fill="#d81b60"/><rect x="192" y="0" width="24" height="20" fill="#76dbff"/><rect x="216" y="0" width="24" height="20" fill="#45529d"/><rect x="240" y="0" width="24" height="20" fill="#cfdb00"/><rect x="264" y="0" width="24" height="20" fill="#45529d"/><rect x="288" y="0" width="24" height="20" fill="#dc8a00"/><rect x="312" y="0" width="24" height="20" fill="#76dbff"/><rect x="336" y="0" width="24" height="20" fill="#45529d"/><rect x="360" y="0" width="24" height="20" fill="#cfdb00"/><rect x="384" y="0" width="24" height="20" fill="#dc8a00"/><rect x="408" y="0" width="24" height="20" fill="#d81b60"/><rect x="432" y="0" width="24" height="20" fill="#76dbff"/><rect x="456" y="0" width="24" height="20" fill="#45529d"/><rect x="24" y="146" width="432" height="20" fill="#8a4d9e"/><rect x="30" y="150" width="8" height="12" fill="#5a58ae"/><rect x="44" y="150" width="8" height="12" fill="#5a58ae"/><rect x="58" y="150" width="8" height="12" fill="#5a58ae"/><rect x="72" y="150" width="8" height="12" fill="#5a58ae"/><rect x="86" y="150" width="8" height="12" fill="#5a58ae"/><rect x="100" y="150" width="8" height="12" fill="#5a58ae"/><rect x="114" y="150" width="8" height="12" fill="#5a58ae"/><rect x="128" y="150" width="8" height="12" fill="#5a58ae"/><rect x="142" y="150" width="8" height="12" fill="#5a58ae"/><rect x="156" y="150" width="8" height="12" fill="#5a58ae"/><rect x="170" y="150" width="8" height="12" fill="#5a58ae"/><rect x="184" y="150" width="8" height="12" fill="#5a58ae"/><rect x="198" y="150" width="8" height="12" fill="#5a58ae"/><rect x="212" y="150" width="8" height="12" fill="#5a58ae"/><rect x="226" y="150" width="8" height="12" fill="#5a58ae"/><rect x="240" y="150" width="8" height="12" fill="#5a58ae"/><rect x="254" y="150" width="8" height="12" fill="#5a58ae"/><rect x="268" y="150" width="8" height="12" fill="#5a58ae"/><rect x="282" y="150" width="8" height="12" fill="#5a58ae"/><rect x="296" y="150" width="8" height="12" fill="#5a58ae"/><rect x="310" y="150" width="8" height="12" fill="#5a58ae"/><rect x="324" y="150" width="8" height="12" fill="#5a58ae"/><rect x="338" y="150" width="8" height="12" fill="#5a58ae"/><rect x="352" y="150" width="8" height="12" fill="#5a58ae"/><rect x="366" y="150" width="8" height="12" fill="#5a58ae"/><rect x="380" y="150" width="8" height="12" fill="#5a58ae"/><rect x="394" y="150" width="8" height="12" fill="#5a58ae"/><rect x="408" y="150" width="8" height="12" fill="#5a58ae"/><rect x="422" y="150" width="8" height="12" fill="#5a58ae"/><rect x="436" y="150" width="8" height="12" fill="#5a58ae"/><rect x="206" y="50" width="70" height="9" fill="#f5c3d6"/><rect x="40" y="96" width="56" height="5" fill="#ef9dbc"/><rect x="46" y="105" width="44" height="4" fill="#e878a4"/><rect x="164" y="96" width="60" height="5" fill="#ef9dbc"/><rect x="170" y="105" width="48" height="4" fill="#e878a4"/><rect x="384" y="96" width="56" height="5" fill="#ef9dbc"/><rect x="390" y="105" width="44" height="4" fill="#e878a4"/><rect x="92" y="210" width="60" height="5" fill="#ef9dbc"/><rect x="98" y="219" width="48" height="4" fill="#e878a4"/><rect x="250" y="210" width="50" height="5" fill="#ef9dbc"/><rect x="256" y="219" width="38" height="4" fill="#e878a4"/><rect x="330" y="210" width="40" height="5" fill="#ef9dbc"/><rect x="336" y="219" width="28" height="4" fill="#e878a4"/></symbol><symbol id="s11" viewBox="0 0 480 270" preserveAspectRatio="none"><rect width="480" height="270" fill="#45529d"/><rect x="246" y="0" width="234" height="270" fill="#7ccdf0"/><g filter="url(#bl7)"><ellipse cx="361" cy="50" rx="24" ry="22" fill="#1f1513"/><rect x="350" y="80" width="22" height="26" fill="#9a5535"/><ellipse cx="361" cy="64" rx="18.500" ry="25" fill="#b4683f"/><path d="M349 72q12 8 24 0q-2 12 -12 12q-10 0 -12 -12z" fill="#fbf4ef"/><path d="M322 116q20 -12 39 -14q19 2 39 14l-20 30h-38z" fill="#ae6540"/><path d="M300 250c0 -50 4 -100 22 -134q16 30 39 32q23 -2 39 -32c18 34 22 84 22 134z" fill="#eef1f8"/><g stroke="#2f3a72" stroke-width="7" fill="none"><path d="M316 134q45 36 90 0"/><path d="M310 152q51 34 102 0"/><path d="M306 170q55 32 110 0"/><path d="M303 188q58 30 116 0"/><path d="M301 206q60 28 120 0"/><path d="M300 224q61 26 122 0"/><path d="M300 242q61 24 122 0"/></g></g><rect x="246" y="0" width="21.5" height="22" fill="#dc8a00"/><rect x="246" y="248" width="21.5" height="22" fill="#45529d"/><rect x="267.3" y="0" width="21.5" height="22" fill="#d81b60"/><rect x="267.3" y="248" width="21.5" height="22" fill="#76dbff"/><rect x="288.6" y="0" width="21.5" height="22" fill="#cfdb00"/><rect x="288.6" y="248" width="21.5" height="22" fill="#dc8a00"/><rect x="309.9" y="0" width="21.5" height="22" fill="#45529d"/><rect x="309.9" y="248" width="21.5" height="22" fill="#cfdb00"/><rect x="331.2" y="0" width="21.5" height="22" fill="#76dbff"/><rect x="331.2" y="248" width="21.5" height="22" fill="#d81b60"/><rect x="352.5" y="0" width="21.5" height="22" fill="#dc8a00"/><rect x="352.5" y="248" width="21.5" height="22" fill="#45529d"/><rect x="373.8" y="0" width="21.5" height="22" fill="#cfdb00"/><rect x="373.8" y="248" width="21.5" height="22" fill="#dc8a00"/><rect x="395.1" y="0" width="21.5" height="22" fill="#d81b60"/><rect x="395.1" y="248" width="21.5" height="22" fill="#cfdb00"/><rect x="416.4" y="0" width="21.5" height="22" fill="#45529d"/><rect x="416.4" y="248" width="21.5" height="22" fill="#dc8a00"/><rect x="437.7" y="0" width="21.5" height="22" fill="#dc8a00"/><rect x="437.7" y="248" width="21.5" height="22" fill="#d81b60"/><rect x="459" y="0" width="21.5" height="22" fill="#cfdb00"/><rect x="459" y="248" width="21.5" height="22" fill="#cfdb00"/><rect x="246" y="22" width="20" height="21" fill="#dc8a00"/><rect x="460" y="22" width="20" height="21" fill="#45529d"/><rect x="246" y="42.6" width="20" height="21" fill="#cfdb00"/><rect x="460" y="42.6" width="20" height="21" fill="#dc8a00"/><rect x="246" y="63.2" width="20" height="21" fill="#d81b60"/><rect x="460" y="63.2" width="20" height="21" fill="#cfdb00"/><rect x="246" y="83.8" width="20" height="21" fill="#45529d"/><rect x="460" y="83.8" width="20" height="21" fill="#dc8a00"/><rect x="246" y="104.4" width="20" height="21" fill="#dc8a00"/><rect x="460" y="104.4" width="20" height="21" fill="#d81b60"/><rect x="246" y="125" width="20" height="21" fill="#cfdb00"/><rect x="460" y="125" width="20" height="21" fill="#cfdb00"/><rect x="246" y="145.6" width="20" height="21" fill="#dc8a00"/><rect x="460" y="145.6" width="20" height="21" fill="#45529d"/><rect x="246" y="166.2" width="20" height="21" fill="#d81b60"/><rect x="460" y="166.2" width="20" height="21" fill="#76dbff"/><rect x="246" y="186.8" width="20" height="21" fill="#cfdb00"/><rect x="460" y="186.8" width="20" height="21" fill="#dc8a00"/><rect x="246" y="207.4" width="20" height="21" fill="#45529d"/><rect x="460" y="207.4" width="20" height="21" fill="#cfdb00"/><rect x="246" y="228" width="20" height="21" fill="#76dbff"/><rect x="460" y="228" width="20" height="21" fill="#d81b60"/><rect x="60" y="50" width="130" height="11" fill="#dfe3f5"/><circle cx="80" cy="100" r="9" fill="none" stroke="#8f99d0" stroke-width="3"/><rect x="56" y="124" width="50" height="4" fill="#8f99d0"/><rect x="61" y="134" width="40" height="4" fill="#7781c0"/><circle cx="80" cy="170" r="9" fill="none" stroke="#8f99d0" stroke-width="3"/><rect x="56" y="194" width="50" height="4" fill="#8f99d0"/><rect x="61" y="204" width="40" height="4" fill="#7781c0"/><circle cx="180" cy="100" r="9" fill="none" stroke="#8f99d0" stroke-width="3"/><rect x="156" y="124" width="50" height="4" fill="#8f99d0"/><rect x="161" y="134" width="40" height="4" fill="#7781c0"/><circle cx="180" cy="170" r="9" fill="none" stroke="#8f99d0" stroke-width="3"/><rect x="156" y="194" width="50" height="4" fill="#8f99d0"/><rect x="161" y="204" width="40" height="4" fill="#7781c0"/></symbol><symbol id="s12" viewBox="0 0 480 270" preserveAspectRatio="none"><rect width="480" height="270" fill="#dc8a00"/><rect x="150" y="42" width="180" height="12" fill="#f8dcae"/></symbol>
</defs>
<path d="M4.2 2.8h4.8l2 2v6.8h-6.8z" fill="#f37737"/><path d="M9 2.8l2 2h-2z" fill="#fbc3a4"/><rect x="5.4" y="6.4" width="4.4" height="3.2" fill="#f9a27a"/>
<path d="M764.8 5.6 l2.8 2.8 l2.8 -2.8" fill="none" stroke="#fcfcfc" stroke-width="0.8"/>
<path d="M780.2 4.500l2.500 2.500l-2.500 2.500l-2.500 -2.500z" fill="none" stroke="#fcfcfc" stroke-width="0.85"/>
<path d="M790.700 4.900l4.200 4.200M794.900 4.900l-4.200 4.200" stroke="#fcfcfc" stroke-width="0.85"/>
<g transform="translate(7.9 39.2) scale(0.94)"><rect x="-3.6" y="-3.2" width="7.2" height="6.4" rx="0.5" fill="#e4e5e6" stroke="#34383c" stroke-width="0.9"/><rect x="-2" y="-1.4" width="3.6" height="3.2" fill="#85888b"/><rect x="0.6" y="-2.2" width="1.8" height="1.8" fill="#34383c"/></g>
<path d="M16.1 39.3 h2.8 l-1.4 1.6z" fill="#34383c"/>
<g transform="translate(26.2 39.2) scale(0.94)"><path d="M-3.4 -3.2h3l0.8 1.2h3v5.2h-6.8z" fill="#f7f7f7" stroke="#34383c" stroke-width="0.9"/><path d="M-3.4 -3.2h3l0.8 1.4h-3.8z" fill="#34383c"/></g>
<path d="M34.6 39.3 h2.8 l-1.4 1.6z" fill="#34383c"/>
<g transform="translate(44.4 39.2) scale(0.94)"><rect x="-3.4" y="-3.3" width="6.800" height="6.600" fill="#a7aaac" stroke="#55585b" stroke-width="0.800"/><rect x="-1.900" y="-3.300" width="3.800" height="2.500" fill="#f4f4f4"/><rect x="0.300" y="-3.100" width="1.100" height="2" fill="#34383c"/><rect x="-2" y="0.700" width="4" height="2.600" fill="#f7f7f7"/></g>
<path d="M52.6 39.3 h2.8 l-1.4 1.6z" fill="#34383c"/>
<rect x="58.65" y="33.7" width="0.7" height="11" fill="#dfe1e2"/>
<g transform="translate(67 39.2) scale(0.94)"><path d="M-3 -3.2h6v4.6l-1.8 1.8h-4.2z" fill="#f7f7f7" stroke="#34383c" stroke-width="0.9"/><rect x="-3" y="-3.2" width="3" height="3" fill="#34383c"/><path d="M3 1.4l-1.8 1.8v-1.8z" fill="#34383c"/></g>
<g transform="translate(80.6 39.2) scale(0.94)"><rect x="-2.4" y="-3.4" width="4.8" height="1.6" fill="#85888b"/><rect x="-3.7" y="-1.4" width="7.4" height="3.4" fill="#85888b"/><rect x="-2.2" y="0.6" width="4.4" height="2.8" fill="#f7f7f7" stroke="#34383c" stroke-width="0.7"/><rect x="-2.2" y="0.2" width="4.4" height="0.8" fill="#34383c"/></g>
<rect x="88.65" y="33.7" width="0.7" height="11" fill="#dfe1e2"/>
<g transform="translate(97.7 39.2) scale(0.94)"><path d="M-2.4 -3.4l4.2 5M2.4 -3.4l-4.2 5" stroke="#5d6063" stroke-width="0.9" fill="none"/><circle cx="-2.3" cy="2.4" r="1" fill="none" stroke="#5d6063" stroke-width="0.8"/><circle cx="2.3" cy="2.4" r="1" fill="none" stroke="#5d6063" stroke-width="0.8"/></g>
<g transform="translate(111.5 39.2) scale(0.94)"><rect x="-3.6" y="-3.2" width="4" height="5.4" fill="#d0d2d3" stroke="#85888b" stroke-width="0.7"/><path d="M-1.6 -2.2h4.2l1 1v3.4l-1.2 1.2h-4z" fill="#f7f7f7" stroke="#34383c" stroke-width="0.8"/></g>
<g transform="translate(124.4 39.2) scale(0.94)"><rect x="-3.2" y="-2.8" width="6.4" height="6.2" fill="#dcdedf" stroke="#b4b6b8" stroke-width="0.8"/><rect x="-1.6" y="-3.6" width="3.2" height="1.6" fill="#b4b6b8"/><rect x="-1.8" y="-0.8" width="3.6" height="3" fill="#f0f0f0"/></g>
<path d="M132.6 39.3 h2.8 l-1.4 1.6z" fill="#b4b6b8"/>
<rect x="138.15" y="33.7" width="0.7" height="11" fill="#dfe1e2"/>
<g transform="translate(147 39.2) scale(0.94)"><rect x="-0.7" y="-3.6" width="1.4" height="3" fill="#b4b6b8"/><path d="M-2.6 -0.6h5.2l0.6 4h-6.4z" fill="#b4b6b8"/></g>
<rect x="155.25" y="33.7" width="0.7" height="11" fill="#dfe1e2"/>
<g transform="translate(163 39.2) scale(0.94)"><path d="M-2.6 -1.8h3a2.4 2.4 0 0 1 0 4.8h-1.4" fill="none" stroke="#b4b6b8" stroke-width="0.9"/><path d="M-3.6 -1.8l2-1.8v3.6z" fill="#b4b6b8"/></g>
<path d="M171.1 39.3 h2.8 l-1.4 1.6z" fill="#b4b6b8"/>
<g transform="translate(182 39.2) scale(0.94)"><path d="M2.6 -1.8h-3a2.4 2.4 0 0 0 0 4.8h1.4" fill="none" stroke="#b4b6b8" stroke-width="0.9"/><path d="M3.6 -1.8l-2-1.8v3.6z" fill="#b4b6b8"/></g>
<path d="M189.6 39.3 h2.8 l-1.4 1.6z" fill="#b4b6b8"/>
<rect x="195.25" y="33.7" width="0.7" height="11" fill="#dfe1e2"/>
<g transform="translate(204 39.2) scale(0.94)"><circle cx="-0.8" cy="-0.8" r="2.5" fill="none" stroke="#85888b" stroke-width="0.8"/><path d="M1 1l2.6 2.6" stroke="#85888b" stroke-width="1"/></g>
<g transform="translate(218 39.2) scale(0.94)"><path d="M-2.5 2.2l2.5 -6.200l2.500 6.200M-1.600 0.100h3.200" fill="none" stroke="#3d4043" stroke-width="1.150"/><path d="M-3.2 3.4h6.4" stroke="#3d4043" stroke-width="0.5" stroke-dasharray="0.8 0.5"/></g>
<rect x="226.15" y="33.7" width="0.7" height="11" fill="#dfe1e2"/>
<g transform="translate(235 39.2) scale(0.94)"><rect x="-2.6" y="-3.4" width="0.7" height="6.8" fill="#cfd1d2"/><rect x="-0.9" y="-3.4" width="0.7" height="6.8" fill="#cfd1d2"/><rect x="0.8" y="-3.4" width="0.7" height="6.8" fill="#cfd1d2"/><rect x="2.5" y="-3.4" width="0.7" height="6.8" fill="#cfd1d2"/></g>
<rect x="242.3" y="32.4" width="12.9" height="13" rx="1.5" fill="#d6d8da"/>
<g transform="translate(248.3 39.2) scale(0.94)"><rect x="-3.2" y="-3.8" width="0.7" height="7.6" fill="#a9acae"/><rect x="-1.4" y="-3.8" width="0.7" height="7.6" fill="#a9acae"/><rect x="0.4" y="-3.8" width="0.7" height="7.6" fill="#a9acae"/><rect x="2.2" y="-0.8" width="0.7" height="4.6" fill="#a9acae"/><path d="M1.4 -1.6h2.6l-1.3 -2z" fill="#34383c"/></g>
<g transform="translate(263.5 39.2) scale(0.94)"><rect x="-5.2" y="-3.6" width="10.6" height="7.4" fill="#5f6b78"/><rect x="-5.2" y="-3.6" width="10.6" height="2" fill="#3daee9"/><rect x="-0.1" y="-1.6" width="0.5" height="5.4" fill="#8b96a1"/><rect x="-5.2" y="3.2" width="10.6" height="0.6" fill="#8b96a1"/></g>
<path d="M273 39.3 h2.8 l-1.4 1.6z" fill="#34383c"/>
<g transform="translate(284 39.2) scale(0.94)"><path d="M-3.6 -3h7.2v5.2h-1.6l-1 1.2h-2.2l-1 -1.2h-1.4z" fill="#f1f8fd" stroke="#8fcdf0" stroke-width="0.850"/></g>
<rect x="292.15" y="33.7" width="0.7" height="11" fill="#dfe1e2"/>
<g transform="translate(301 39.2) scale(0.94)"><rect x="-3.6" y="-3.4" width="7.2" height="5" fill="#f7f7f7" stroke="#46494c" stroke-width="0.8"/><path d="M-0.8 -2.2l2 1.3l-2 1.3z" fill="#46494c"/><rect x="-0.35" y="1.6" width="0.7" height="1.4" fill="#46494c"/><rect x="-1.8" y="3" width="3.6" height="0.7" fill="#46494c"/></g>
<g transform="translate(315 39.2) scale(0.94)"><rect x="-3.6" y="-3.4" width="7.2" height="5" fill="#f7f7f7" stroke="#46494c" stroke-width="0.8"/><rect x="-1.4" y="-2.4" width="2.4" height="2.8" fill="#85888b"/><path d="M0 -2l1.8 1.1l-1.8 1.1z" fill="#46494c"/><rect x="-0.35" y="1.6" width="0.7" height="1.4" fill="#46494c"/><rect x="-1.8" y="3" width="3.6" height="0.7" fill="#46494c"/></g>
<rect x="323.15" y="33.7" width="0.7" height="11" fill="#dfe1e2"/>
<g transform="translate(331 39.2) scale(0.94)"><rect x="-3.5" y="-3.5" width="1.3" height="7" fill="#34383c"/><rect x="-1.6" y="-3.5" width="1.3" height="7" fill="#34383c"/><rect x="0.3" y="-3.5" width="1.3" height="7" fill="#34383c"/><rect x="2.2" y="-3.5" width="1.3" height="7" fill="#7a7d80"/><rect x="-3.5" y="-1.5" width="7" height="0.5" fill="#cfd1d2"/><rect x="-3.5" y="0.9" width="7" height="0.5" fill="#cfd1d2"/><rect x="2.2" y="1.4" width="1.3" height="2.1" fill="#eff0f1"/></g>
<path d="M339.2 39.3 h2.8 l-1.4 1.6z" fill="#34383c"/>
<g transform="translate(350 39.2) scale(0.94)"><rect x="-3.3" y="-3.3" width="6.6" height="6.6" fill="#f7f7f7" stroke="#34383c" stroke-width="0.9"/><path d="M-3.3 3.300v-2l2.200 -1.600l0.800 1l3.600 -3.600v6.200z" fill="#34383c"/></g>
<g transform="translate(363.7 39.2) scale(0.94)"><rect x="-3.2" y="-3.2" width="6.4" height="6.4" fill="#f7f7f7" stroke="#34383c" stroke-width="1.1"/><path d="M-0.9 -1.5l2.2 1.5l-2.2 1.5z" fill="#34383c"/></g>
<g transform="translate(378 39.2) scale(0.94)"><rect x="-2.8" y="-3.4" width="1.8" height="6.6" fill="#34383c"/><rect x="-0.6" y="-0.8" width="1.6" height="4" fill="#34383c"/><rect x="1.6" y="-1.8" width="1.2" height="5" fill="#34383c"/><rect x="1.6" y="-3.2" width="1.2" height="0.8" fill="#34383c"/></g>
<rect x="385.65" y="33.7" width="0.7" height="11" fill="#dfe1e2"/>
<g transform="translate(395 39.2) scale(0.94)"><rect x="-3.3" y="-3.3" width="6.6" height="6.6" fill="#f7f7f7" stroke="#85888b" stroke-width="0.9"/><rect x="-3.3" y="-3.3" width="6.6" height="1.3" fill="#85888b"/><path d="M-1.7 -1h3.4M0 -1v3.2" stroke="#34383c" stroke-width="1"/></g>
<g transform="translate(407 39.2) scale(0.94)"><path d="M-3 3h2v-1a2.9 2.9 0 1 1 2 0v1h2" fill="none" stroke="#b4b6b8" stroke-width="0.9"/></g>
<path d="M416.1 39.3 h2.8 l-1.4 1.6z" fill="#d9b9bd"/>
<g transform="translate(427 39.2) scale(0.94)"><path d="M-1.6 3.4v-6.8h3.8M-1.6 -0.4h2.8" fill="none" stroke="#f59b84" stroke-width="1.1"/></g>
<g transform="translate(441 39.2) scale(0.94)"><path d="M-3.6 -1h2.6M0.2 -1h3M-1.6 -2.8l1.8 1.8l-1.8 1.8" fill="none" stroke="#5a5d60" stroke-width="0.8"/><path d="M2 0.6v2.8M0.6 2h2.8" stroke="#85888b" stroke-width="0.6"/></g>
<rect x="448" y="32.4" width="12.6" height="13" rx="1.5" fill="#d6d8da"/>
<g transform="translate(454.4 39.2) scale(0.94)"><path d="M-3 3.2l0.7 -2l4.3 -4.4l1.4 1.4l-4.4 4.3z" fill="#34383c"/></g>
<g transform="translate(470.6 39.2) scale(0.94)"><path d="M-3.6 -3h7.2v5.2h-1.6l-1 1.2h-2.2l-1 -1.2h-1.4z" fill="#f7f7f7" stroke="#34383c" stroke-width="0.9"/><path d="M-2.2 2.2l1 1.2h2.2l1 -1.2z" fill="#34383c"/></g>
<path d="M478.6 39.3 h2.8 l-1.4 1.6z" fill="#34383c"/>
<g transform="translate(490 39.2) scale(0.94)"><rect x="-3.6" y="-3.2" width="5.6" height="4.4" rx="0.6" fill="#f7f7f7" stroke="#34383c" stroke-width="0.8"/><path d="M-1.6 -1.2h5.4v4.2h-1.4l-0.8 0.8h-1.6l-0.8 -0.8h-0.8z" fill="#f7f7f7" stroke="#34383c" stroke-width="0.8"/></g>
<g transform="translate(503.7 39.2) scale(0.94)"><path d="M-3.6 -3h7.2v5.2h-1.6l-1 1.2h-2.2l-1 -1.2h-1.4z" fill="#f7f7f7" stroke="#34383c" stroke-width="0.9"/><path d="M-2.2 2.2l1 1.2h2.2l1 -1.2z" fill="#34383c"/></g>
<rect x="511.15" y="33.7" width="0.7" height="11" fill="#dfe1e2"/>
<g transform="translate(520 39.2) scale(0.94)"><rect x="-3.4" y="-3.4" width="6.8" height="6.8" fill="#a0a3a6"/><rect x="-3.4" y="-3.4" width="2.6" height="6.8" fill="#34383c"/><path d="M0 -2.2h2.6v3l-1.6 1.6h-1z" fill="#f4f4f4"/><rect x="-3.4" y="-3.4" width="6.8" height="1" fill="#34383c"/></g>
<path d="M528 39.3 h2.8 l-1.4 1.6z" fill="#34383c"/>
<rect x="2.4" y="50.9" width="12.6" height="13" rx="1.5" fill="#d6d8da"/>
<g transform="translate(8.6 57.6) scale(0.94)"><path d="M-2.2 -3.4v6.8l1.7 -1.7h3.2z" fill="#1b1e20"/></g>
<g transform="translate(22.5 57.6) scale(0.94)"><rect x="-2.4" y="-2.4" width="4.8" height="4.8" fill="none" stroke="#34383c" stroke-width="0.7"/><rect x="-3.4" y="-3.4" width="1.2" height="1.2" fill="#34383c"/><rect x="-3.4" y="-0.6" width="1.2" height="1.2" fill="#34383c"/><rect x="-3.4" y="2.2" width="1.2" height="1.2" fill="#34383c"/><rect x="-0.6" y="-3.4" width="1.2" height="1.2" fill="#34383c"/><rect x="-0.6" y="2.2" width="1.2" height="1.2" fill="#34383c"/><rect x="2.2" y="-3.4" width="1.2" height="1.2" fill="#34383c"/><rect x="2.2" y="-0.6" width="1.2" height="1.2" fill="#34383c"/><rect x="2.2" y="2.2" width="1.2" height="1.2" fill="#34383c"/></g>
<rect x="30.15" y="52.1" width="0.7" height="11" fill="#dfe1e2"/>
<g transform="translate(38.6 57.6) scale(0.94)"><rect x="-3.6" y="-3.6" width="7.2" height="0.9" fill="#34383c"/><rect x="-2.8" y="-2" width="5.6" height="3.4" fill="#8d9093"/><rect x="-1.2" y="-2" width="1.2" height="3.4" fill="#dcdddf"/><rect x="0.9" y="-0.6" width="1.6" height="1.6" fill="#34383c"/><rect x="-4.6" y="2.2" width="9.4" height="2.4" fill="#2d64a5"/></g>
<path d="M46.6 57.7 h2.8 l-1.4 1.6z" fill="#34383c"/>
<g transform="translate(57 57.6) scale(0.94)"><path d="M-0.6 -3.8h1.2v1.6l2.6 2.6l-1.6 1.6h-3.4l-1.4 -1.4z" fill="#34383c"/><path d="M-1.6 -0.6h2.6l1 1h-4.6z" fill="#e6e7e8"/><rect x="-4.6" y="2.2" width="9.4" height="2.4" fill="#6fa3d4"/></g>
<path d="M65.1 57.7 h2.8 l-1.4 1.6z" fill="#34383c"/>
<rect x="70.65" y="52.1" width="0.7" height="11" fill="#dfe1e2"/>
<g transform="translate(79.5 57.6) scale(0.94)"><rect x="-3.6" y="-0.5" width="7.2" height="1" fill="#34383c"/></g>
<g transform="translate(93.2 57.6) scale(0.94)"><rect x="-3.6" y="-2.7" width="7.2" height="5.4" fill="#1f2224"/></g>
<g transform="translate(107.2 57.6) scale(0.94)"><ellipse cx="0" cy="0" rx="3.5" ry="2.8" fill="#1f2224"/></g>
<rect x="115.25" y="52.1" width="0.7" height="11" fill="#dfe1e2"/>
<g transform="translate(123.2 57.6) scale(0.94)"><rect x="-3.6" y="-0.5" width="5.4" height="1" fill="#34383c"/><path d="M1.2 -1.8l2.6 1.8l-2.6 1.8z" fill="#34383c"/></g>
<path d="M131.6 57.7 h2.8 l-1.4 1.6z" fill="#34383c"/>
<g transform="translate(141 57.6) scale(0.94)"><path d="M-3 2.6l1 -2.4l3.4 -3.6l1.4 1.4l-3.6 3.6z" fill="none" stroke="#4d5053" stroke-width="0.8"/><path d="M-3.4 3.2q2 -1.4 3.4 0t3.4 0" fill="none" stroke="#4d5053" stroke-width="0.8"/><rect x="2.6" y="2.4" width="1.2" height="1.2" fill="#4d5053"/></g>
<path d="M149.6 57.7 h2.8 l-1.4 1.6z" fill="#34383c"/>
<g transform="translate(160 57.6) scale(0.94)"><path d="M-2.4 -2.8h2.4v5.4h2.6" fill="none" stroke="#34383c" stroke-width="0.9"/><rect x="-3.4" y="-3.6" width="1.6" height="1.6" fill="#34383c"/><rect x="2" y="1.8" width="1.6" height="1.6" fill="#34383c"/></g>
<path d="M168 57.7 h2.8 l-1.4 1.6z" fill="#34383c"/>
<rect x="173.65" y="52.1" width="0.7" height="11" fill="#dfe1e2"/>
<g transform="translate(181.6 57.6) scale(0.94)"><path d="M0 -3.8l3.8 3.8l-3.8 3.8l-3.8 -3.8z" fill="#1f2224"/></g>
<path d="M189.6 57.7 h2.8 l-1.4 1.6z" fill="#34383c"/>
<g transform="translate(200 57.6) scale(0.94)"><circle cx="0" cy="0" r="3.6" fill="#1f2224"/><rect x="-1.8" y="-1.6" width="1.1" height="1.1" fill="#eee"/><rect x="0.7" y="-1.6" width="1.1" height="1.1" fill="#eee"/><path d="M-2 0.6h4a2 2 0 0 1 -4 0z" fill="#eee"/></g>
<path d="M208 57.7 h2.8 l-1.4 1.6z" fill="#34383c"/>
<g transform="translate(218 57.6) scale(0.94)"><path d="M-4 0l2.4 -2.2v1.4h3.2v-1.4l2.4 2.2l-2.4 2.2v-1.4h-3.2v1.4z" fill="#1f2224"/></g>
<path d="M226.4 57.7 h2.8 l-1.4 1.6z" fill="#34383c"/>
<g transform="translate(236.5 57.6) scale(0.94)"><rect x="-3.6" y="-3.8" width="2.5" height="2.5" fill="#1f2224"/><rect x="-0.2" y="-3.8" width="4" height="2.5" fill="#1f2224"/><rect x="-3.6" y="-0.4" width="2.5" height="4.2" fill="#1f2224"/><rect x="-0.2" y="-0.4" width="4" height="4.2" fill="#1f2224"/></g>
<path d="M244.6 57.7 h2.8 l-1.4 1.6z" fill="#34383c"/>
<g transform="translate(255 57.6) scale(0.94)"><path d="M-3.4 -3.4h6.8v5h-3.6l-1.6 2v-2h-1.6z" fill="#1f2224"/></g>
<path d="M263 57.7 h2.8 l-1.4 1.6z" fill="#34383c"/>
<g transform="translate(273.5 57.6) scale(0.94)"><polygon points="0,-3.6 1,-1.08 3.71,-0.91 1.62,0.83 2.29,3.46 0,2 -2.29,3.46 -1.62,0.83 -3.71,-0.91 -1,-1.08" fill="#1f2224"/></g>
<path d="M281.1 57.7 h2.8 l-1.4 1.6z" fill="#34383c"/>
<g transform="translate(291.5 57.6) scale(0.94)"><rect x="-3.4" y="-3.2" width="6.8" height="6.6" fill="#4a4d50"/><path d="M-3.4 -3.2l1.2 -0.6h6.2l-0.6 0.6z" fill="#8a8d90"/><rect x="1.8" y="-3.2" width="1.6" height="6.6" fill="#2a2c2e"/></g>
<path d="M299.6 57.7 h2.8 l-1.4 1.6z" fill="#34383c"/>
<rect x="305.25" y="52.1" width="0.7" height="11" fill="#dfe1e2"/>
<g transform="translate(314.4 57.6) scale(0.94)"><rect x="-3.4" y="-3.4" width="4.4" height="4.4" fill="#f7f7f7" stroke="#5a5d60" stroke-width="0.8"/><rect x="-0.8" y="-0.8" width="4.2" height="4.2" fill="#f7f7f7" stroke="#5a5d60" stroke-width="0.8"/></g>
<g transform="translate(327 57.6) scale(0.94)"><rect x="-3.6" y="-3.6" width="0.7" height="7.2" fill="#d0d2d3"/><rect x="-2.4" y="-2.8" width="5.6" height="1.8" fill="#d0d2d3"/><rect x="-2.4" y="0.6" width="3.4" height="1.8" fill="#d0d2d3"/></g>
<path d="M335.6 57.7 h2.8 l-1.4 1.6z" fill="#b4b6b8"/>
<g transform="translate(345 57.6) scale(0.94)"><rect x="-3.4" y="-3.4" width="6.8" height="0.7" fill="#d0d2d3"/><rect x="-2.4" y="-1.6" width="5.8" height="0.8" fill="#d0d2d3"/><rect x="-1.4" y="0.2" width="4.8" height="0.8" fill="#d0d2d3"/><rect x="-3.4" y="2.4" width="6.8" height="0.7" fill="#d0d2d3"/></g>
<path d="M353.6 57.7 h2.8 l-1.4 1.6z" fill="#b4b6b8"/>
<g transform="translate(364 57.6) scale(0.94)"><rect x="-3.4" y="-2" width="2.4" height="4" rx="1" fill="none" stroke="#d0d2d3" stroke-width="0.8"/><rect x="1" y="-2" width="2.4" height="4" rx="1" fill="none" stroke="#d0d2d3" stroke-width="0.8"/><rect x="-2.5" y="-3.6" width="0.6" height="7.2" fill="#d0d2d3"/><rect x="1.9" y="-3.6" width="0.6" height="7.2" fill="#d0d2d3"/></g>
<path d="M371.6 57.7 h2.8 l-1.4 1.6z" fill="#b4b6b8"/>
<rect x="377.15" y="52.1" width="0.7" height="11" fill="#dfe1e2"/>
<g transform="translate(386 57.6) scale(0.94)"><rect x="-3.2" y="-2.2" width="7" height="5" fill="#9a9da0"/><rect x="-3.7" y="-2.8" width="7" height="5" fill="#1f2224"/></g>
<g transform="translate(400 57.6) scale(0.94)"><path d="M-2.2 -3.8v6h6M-3.8 -2.2h6v6" fill="none" stroke="#c6c8ca" stroke-width="0.8"/></g>
<g transform="translate(413 57.6) scale(0.94)"><path d="M-3 3l5.6 -5.8" stroke="#c6c8ca" stroke-width="1.3"/><path d="M2.2 -3.6l1.2 1.2" stroke="#c6c8ca" stroke-width="0.8"/></g>
<path d="M420.6 57.7 h2.8 l-1.4 1.6z" fill="#b4b6b8"/>
<rect x="425.65" y="52.1" width="0.7" height="11" fill="#dfe1e2"/>
<g transform="translate(435.4 57.6) scale(0.94)"><path d="M-3.4 -3l6.8 6.2M-3.4 3.2h6.8" stroke="#2a2d30" stroke-width="0.9" fill="none"/><path d="M-1 1.6l3.6 -4.6l1 0.8l-3.6 4.6z" fill="#2a2d30"/><rect x="-3.8" y="-3.6" width="1.4" height="1.4" fill="#2a2d30"/></g>
<g transform="translate(449.4 57.6) scale(0.94)"><rect x="-3.2" y="-3.2" width="6.4" height="6.4" fill="#f7f7f7" stroke="#34383c" stroke-width="0.9"/><circle cx="0.2" cy="0.2" r="1.3" fill="#5aa7c7"/><rect x="2.2" y="2.6" width="1.2" height="1.2" fill="#34383c"/></g>
<g transform="translate(463 57.6) scale(0.94)"><rect x="-3.4" y="-3.4" width="6.8" height="6.8" fill="#c9cbcc"/><rect x="-0.3" y="-3.4" width="0.6" height="6.8" fill="#dfe0e1"/><rect x="-3.4" y="-0.3" width="6.8" height="0.6" fill="#dfe0e1"/></g>
<path d="M97 241.200l1.700 -1.300v2.600z" fill="#f4f4f4"/><path d="M607.600 241.200l-1.700 -1.300v2.600z" fill="#f4f4f4"/>
<path d="M92.2 75l2.4 2.4M94.6 75l-2.4 2.4" stroke="#6e7276" stroke-width="0.6"/>
<path d="M609.4 72.6v7.6" stroke="#6e7276" stroke-width="0.6" stroke-dasharray="0.9 0.8"/>
<text x="770.6" y="79" font-size="6" fill="#6e7276" font-family="Liberation Sans, sans-serif">?</text>
<path d="M780 75l2.4 2.4M782.4 75l-2.4 2.4" stroke="#6e7276" stroke-width="0.6"/>
<path d="M612.5 91.85 l2.7 2.7 l2.7 -2.7" fill="none" stroke="#3a3d40" stroke-width="0.8"/>
<path d="M612.5 246.85 l2.7 2.7 l2.7 -2.7" fill="none" stroke="#3a3d40" stroke-width="0.8"/>
<path d="M774.6 92.4h3.4M774.6 93.8h3.4M774.6 95.2h3.4" stroke="#6e7276" stroke-width="0.6"/>
<path d="M750.1 111.55 l2.5 2.5 l2.5 -2.5" fill="none" stroke="#3a3d40" stroke-width="0.8"/>
<path d="M750.1 129.35 l2.5 2.5 l2.5 -2.5" fill="none" stroke="#3a3d40" stroke-width="0.8"/>
<path d="M750.1 147.05 l2.5 2.5 l2.5 -2.5" fill="none" stroke="#3a3d40" stroke-width="0.8"/>
<path d="M750.1 182.55 l2.5 2.5 l2.5 -2.5" fill="none" stroke="#3a3d40" stroke-width="0.8"/>
<path d="M679.2 199.4 l1.6 1.7 l3 -3.4" fill="none" stroke="#1f3a52" stroke-width="1.1"/>
<path d="M679.2 213.6 l1.6 1.7 l3 -3.4" fill="none" stroke="#1f3a52" stroke-width="1.1"/>
<path d="M789.2 72h5.4M789.2 74h5.4" stroke="#2c2f33" stroke-width="0.9"/>
<rect x="785" y="80.4" width="14" height="13.6" rx="2" fill="#d8dadc"/>
<rect x="788.4" y="83.6" width="7.2" height="7.2" fill="#f7f7f7" stroke="#2c2f33" stroke-width="0.9"/><rect x="788.4" y="83.6" width="7.2" height="2.2" fill="#2c2f33"/><rect x="788.4" y="85.8" width="2.6" height="5" fill="#6e7276"/>
<path d="M788.6 100.2h6.4M791.8 100.2v5.4M790.2 105.6h3.2" stroke="#4a4d50" stroke-width="0.8" fill="none"/><path d="M788 107h3l2 -1.4l2 1.4" stroke="#4a4d50" stroke-width="0.7" fill="none"/>
<rect x="788.6" y="117" width="6.6" height="6.6" fill="#f7f7f7" stroke="#4a4d50" stroke-width="0.8"/><path d="M788.6 122l2 -2l1.4 1.2l3 -2.6" stroke="#4a4d50" stroke-width="0.7" fill="none"/>
<circle cx="792" cy="137" r="3.3" fill="none" stroke="#4a4d50" stroke-width="0.8"/><path d="M790.6 138.6l0.8 -2.2l2.2 -0.8l-0.8 2.2z" fill="#4a4d50"/>
<path d="M792 149.8l3.6 2.6l-1.4 4.2h-4.4l-1.4 -4.2z" fill="#17191b"/>
<rect x="788.4" y="166.6" width="7.2" height="5" fill="#f7f7f7" stroke="#4a4d50" stroke-width="0.8"/><path d="M790.4 168.4h3.2M790.4 169.8h2" stroke="#4a4d50" stroke-width="0.6"/><path d="M792 171.6v1.8M790.2 173.6h3.6" stroke="#4a4d50" stroke-width="0.7"/>
<rect x="788.4" y="183" width="7.2" height="5" fill="#f7f7f7" stroke="#4a4d50" stroke-width="0.8"/><rect x="790.8" y="184.4" width="3" height="2.4" fill="#4a4d50"/><path d="M792 188v1.8M790.2 190h3.6" stroke="#4a4d50" stroke-width="0.7"/>
<path d="M788.6 199.6h6.8v4.8h-1.4l-0.9 1.2h-2.2l-0.9 -1.2h-1.4z" fill="#e9f5fc" stroke="#8fcdf0" stroke-width="1"/>
<g transform="translate(617.4 262)"><rect x="-0.6" y="-0.6" width="26.8" height="20.6" fill="#c6c9cc"/><rect width="25.6" height="19.2" fill="url(#gBlank)"/></g>
<g transform="translate(661.6 262)"><rect x="-0.6" y="-0.6" width="26.8" height="20.6" fill="#c6c9cc"/><rect width="25.6" height="19.2" fill="url(#gDark)"/><rect width="25.6" height="4.2" fill="#3daee9"/><rect x="0" y="5.6" width="25.6" height="0.8" fill="#aeb3b8"/><rect x="2.2" y="6.6" width="21" height="1.8" fill="#3daee9"/></g>
<g transform="translate(705.6 262)"><rect x="-0.6" y="-0.6" width="26.8" height="20.6" fill="#c6c9cc"/><rect width="25.6" height="19.2" fill="url(#gDark)"/><rect width="25.6" height="4.2" fill="#3daee9"/></g>
<g transform="translate(749.6 262)"><rect x="-0.6" y="-0.6" width="26.8" height="20.6" fill="#c6c9cc"/><rect width="25.6" height="19.2" fill="url(#gDark)"/><rect width="25.6" height="4.2" fill="#3daee9"/><rect x="12.4" y="4.2" width="0.9" height="15" fill="#aeb3b8"/></g>
<g transform="translate(617.4 291)"><rect x="-0.6" y="-0.6" width="26.8" height="20.6" fill="#c6c9cc"/><rect width="25.6" height="19.2" fill="url(#gBlank)"/><path d="M0 4l14 15.2h-14z" fill="#cdd0d2" opacity="0.6"/><rect width="25.6" height="4" fill="#3daee9"/></g>
<g transform="translate(661.6 291)"><rect x="-0.6" y="-0.6" width="26.8" height="20.6" fill="#c6c9cc"/><rect width="25.6" height="19.2" fill="url(#gDark)"/><rect x="2.6" y="6.6" width="20.4" height="2.2" fill="#3daee9"/><rect x="5.6" y="10" width="14.4" height="1.6" fill="#3daee9"/></g>
<g transform="translate(705.6 291)"><rect x="-0.6" y="-0.6" width="26.8" height="20.6" fill="#c6c9cc"/><rect width="25.6" height="19.2" fill="url(#gDark)"/><rect width="25.6" height="4.2" fill="#3daee9"/><rect x="12.4" y="4.2" width="0.9" height="15" fill="#aeb3b8"/><rect x="0" y="11.4" width="12.4" height="0.9" fill="#aeb3b8"/></g>
<g transform="translate(749.6 291)"><rect x="-0.6" y="-0.6" width="26.8" height="20.6" fill="#c6c9cc"/><rect width="25.6" height="19.2" fill="url(#gDark)"/><rect width="25.6" height="4.2" fill="#3daee9"/><rect x="12.4" y="4.2" width="0.9" height="15" fill="#aeb3b8"/><rect x="12.4" y="11.4" width="13.2" height="0.9" fill="#aeb3b8"/></g>
<g transform="translate(617.4 320.2)"><rect x="-0.6" y="-0.6" width="26.8" height="20.6" fill="#c6c9cc"/><rect width="25.6" height="19.2" fill="url(#gDark)"/><rect width="25.6" height="4.2" fill="#3daee9"/><rect x="0" y="11.4" width="25.6" height="0.9" fill="#aeb3b8"/><rect x="12.4" y="4.2" width="0.9" height="7.2" fill="#aeb3b8"/></g>
<g transform="translate(661.6 320.2)"><rect x="-0.6" y="-0.6" width="26.8" height="20.6" fill="#c6c9cc"/><rect width="25.6" height="19.2" fill="url(#gDark)"/><rect width="25.6" height="4.2" fill="#3daee9"/><rect x="0" y="11.4" width="25.6" height="0.9" fill="#aeb3b8"/></g>
<g transform="translate(705.6 320.2)"><rect x="-0.6" y="-0.6" width="26.8" height="20.6" fill="#c6c9cc"/><rect width="25.6" height="19.2" fill="url(#gDark)"/><rect width="25.6" height="4.2" fill="#3daee9"/><rect x="0" y="11.4" width="25.6" height="0.9" fill="#aeb3b8"/><rect x="12.4" y="4.2" width="0.9" height="15" fill="#aeb3b8"/></g>
<g transform="translate(749.6 320.2)"><rect x="-0.6" y="-0.6" width="26.8" height="20.6" fill="#c6c9cc"/><rect width="25.6" height="19.2" fill="url(#gDark)"/><rect width="25.6" height="4.2" fill="#3daee9"/><rect x="0" y="11.4" width="25.6" height="0.9" fill="#aeb3b8"/><rect x="8.2" y="4.2" width="0.9" height="15" fill="#aeb3b8"/><rect x="16.6" y="4.2" width="0.9" height="15" fill="#aeb3b8"/></g>
<rect x="434.4" y="419.8" width="3.6" height="2.6" fill="none" stroke="#8aa4bd" stroke-width="0.5"/>
<rect x="490.4" y="419.8" width="3.6" height="2.6" fill="none" stroke="#8aa4bd" stroke-width="0.5"/><path d="M489.6 421h2M492 419v1.6" stroke="#8aa4bd" stroke-width="0.4"/>
<rect x="546.8" y="418.6" width="5" height="5.4" fill="#f7f7f7" stroke="#6e7276" stroke-width="0.6"/><path d="M548.4 419v2.2h2.2" stroke="#6e7276" stroke-width="0.5" fill="none"/>
<path d="M713 421.8h4M715 419.8v4" stroke="#4a4d50" stroke-width="0.5"/><circle cx="715" cy="421.8" r="0.8" fill="#4a4d50"/>
<path d="M723.6 421.8h2.2" stroke="#4a4d50" stroke-width="0.5"/>
<path d="M729.6 421.8h41" stroke="#4a4d50" stroke-width="0.55"/><circle cx="743.2" cy="421.8" r="1.3" fill="#f4f4f4" stroke="#4a4d50" stroke-width="0.5"/><rect x="749" y="420.8" width="0.9" height="2" fill="#2c2f33"/>
<path d="M772.8 421.8h2.4M774 420.6v2.4" stroke="#4a4d50" stroke-width="0.5"/>
<circle cx="10.3" cy="433.7" r="0.9" fill="#fcfcfc"/><circle cx="8.8" cy="438.4" r="1.25" fill="#fcfcfc"/><circle cx="12.4" cy="443.3" r="1.55" fill="#fcfcfc"/><path d="M14.8 434.500l3.700 2.700l-3.700 2.700" fill="none" stroke="#fcfcfc" stroke-width="1.700"/><rect x="31" y="432.200" width="15.800" height="10.400" rx="0.600" fill="#2f8d90"/><path d="M38 432.200h8.800v10.400h-12z" fill="#c2457d"/><path d="M31 442.600v-3.600l4 -3l3.600 2.600l3.600 -3.400l4.600 4v3.400z" fill="#5a3f6e" opacity="0.550"/><rect x="36" y="435.200" width="6" height="4.200" rx="0.500" fill="#f0d5de"/><rect x="37.600" y="436.300" width="2.800" height="2" fill="#c2457d"/><rect x="37" y="442.600" width="3.800" height="1.500" fill="#6a6d70"/><rect x="35" y="444.100" width="7.800" height="0.900" fill="#c9cbcd"/><rect x="58.500" y="432.900" width="15.200" height="12.400" rx="0.800" fill="#2a8cd4"/><rect x="58.500" y="432.900" width="15.200" height="4.800" rx="0.800" fill="#6cc2f6"/><rect x="60" y="434.500" width="11.400" height="1.300" fill="#e8f5fd"/><rect x="58.500" y="437.700" width="15.200" height="0.700" fill="#1f78bd"/><g transform="translate(93.2 438.8) scale(1.12) translate(-93 -439.4)"><circle cx="93" cy="439.400" r="6.600" fill="#ffb11f"/><path d="M86.400 438.600c0.200 -2.600 1.400 -4.400 3 -5.600c-0.200 1 0 1.800 0.600 2.400c1 -1.600 2.600 -2.800 4.400 -3.200c-0.800 1.200 -0.800 2.400 0 3.400c2.800 0.400 4.800 2.400 5 5c0.200 3.400 -2.600 6 -6.400 6c-3.800 0 -6.800 -3.400 -6.600 -8z" fill="#ff5a36"/><path d="M86.400 439.600c0.600 3.800 3.400 6.400 6.800 6.400c2.400 0 4.400 -1 5.600 -2.800c-4.400 1.600 -9.400 0.400 -12.400 -3.600z" fill="#e8305a"/><circle cx="93.400" cy="439.200" r="3.500" fill="#7542d8"/><path d="M89.800 437.400c1.600 -1.600 4.400 -1.600 6 0.200c-1.800 -0.400 -3.400 -0.200 -4.600 0.800c-0.600 0 -1 -0.400 -1.400 -1z" fill="#ffc83a"/><path d="M96.600 432.800c3 2 4.200 6.200 2.400 9.600c-1.400 2.600 -4 3.800 -6.600 3.600c3.600 -0.800 5.800 -3.800 5.400 -7.400c-0.200 -2.200 -0.600 -4 -1.200 -5.800z" fill="#ffd94a"/></g><circle cx="119.8" cy="439.4" r="6.6" fill="#2a9df0"/><circle cx="119.8" cy="439.4" r="6.6" fill="none" stroke="#1b7fd0" stroke-width="0.8"/><path d="M115.6 438.6c2 -2.6 5 -3.8 8.2 -3.4c-1.2 0.8 -2 1.8 -2.4 3c1.4 0.4 2.6 1.2 3.4 2.4c-2 -0.4 -3.8 0 -5.2 1.2c-0.4 1.4 -0.2 2.6 0.4 3.8c-1.6 -1 -2.4 -2.6 -2.2 -4.4c-1 -0.4 -2 -0.4 -3 0c0.2 -1 0.4 -1.8 0.8 -2.6z" fill="#e8f4fd"/><path d="M141.4 436.6h11.4l0.8 9h-13z" fill="#2a93e6"/><path d="M144 436.6c0 -4 6.2 -4 6.2 0" fill="none" stroke="#54b2f5" stroke-width="1.2"/><path d="M145.2 439.2l3.2 2.2l-3.2 2.2z" fill="#bfe3f8"/><rect x="167.2" y="432.6" width="14.2" height="13.2" rx="1" fill="#3f454a"/><path d="M167.2 445.8v-5l3.4 -4.6l3 3.4l2.6 -2.2l5.2 5v3.4z" fill="#52a672"/><rect x="194" y="432.6" width="14.2" height="13.2" rx="1" fill="#2a2d31"/><path d="M197 437.200h9M197 441.200h9" stroke="#6e7174" stroke-width="0.700"/><rect x="202.600" y="436.200" width="2" height="2" fill="#e6e6e6"/><rect x="199" y="440.400" width="2.400" height="1.600" fill="#e6e6e6"/><rect x="220.8" y="432.6" width="14.2" height="13.2" rx="1" fill="#31363b"/><path d="M226.2 436l3.4 3.4l-3.4 3.4" fill="none" stroke="#e8e9ea" stroke-width="1.1"/><path d="M249.300 430.200h8l4 4v11.400h-12z" fill="#1f8ad6"/><path d="M257.300 430.200l4 4h-4z" fill="#8fcaf2"/><path d="M251.6 437h4M251.6 439h7M251.6 441h7" stroke="#bfe3f8" stroke-width="0.7"/><rect x="256.4" y="435.4" width="2.6" height="2.2" fill="#bfe3f8"/><circle cx="254.600" cy="447.300" r="2.150" fill="#3ccf6e"/><path d="M276.200 430.200h8l4 4v11.400h-12z" fill="#f2581e"/><path d="M284.200 430.200l4 4h-4z" fill="#fbb594"/><rect x="278.4" y="437.4" width="7" height="4.6" fill="#fbc9b0"/><rect x="278.4" y="443" width="7" height="0.8" fill="#fbc9b0"/><circle cx="281.800" cy="447.300" r="2.150" fill="#3ccf6e"/><path d="M641.6 437.4a3.6 3.6 0 0 1 6.4 -1.6M648.6 439.6a3.6 3.6 0 0 1 -6.4 1.6" fill="none" stroke="#fcfcfc" stroke-width="1"/><path d="M648.6 433.4v2.8h-2.8zM641.6 443.6v-2.8h2.8z" fill="#fcfcfc"/><rect x="657.6" y="434.4" width="7.2" height="7.8" rx="0.6" fill="none" stroke="#fcfcfc" stroke-width="0.9"/><rect x="659" y="434.4" width="4.4" height="2.6" fill="#fcfcfc"/><rect x="659.2" y="438.6" width="2.4" height="2" fill="#fcfcfc"/><path d="M673 436.8h1.8l2.6 -2.4v8l-2.6 -2.4h-1.8z" fill="#fcfcfc"/><path d="M678.6 435a4.4 4.4 0 0 1 0 6.8" fill="none" stroke="#9a9da0" stroke-width="0.9"/><circle cx="692.4" cy="438.4" r="1.9" fill="#fcfcfc"/><path d="M695.2 438.4 L696.8 438.4" stroke="#fcfcfc" stroke-width="0.8"/><path d="M694.38 440.38 L695.51 441.51" stroke="#fcfcfc" stroke-width="0.8"/><path d="M692.4 441.2 L692.4 442.8" stroke="#fcfcfc" stroke-width="0.8"/><path d="M690.42 440.38 L689.29 441.51" stroke="#fcfcfc" stroke-width="0.8"/><path d="M689.6 438.4 L688 438.4" stroke="#fcfcfc" stroke-width="0.8"/><path d="M690.42 436.42 L689.29 435.29" stroke="#fcfcfc" stroke-width="0.8"/><path d="M692.4 435.6 L692.4 434" stroke="#fcfcfc" stroke-width="0.8"/><path d="M694.38 436.42 L695.51 435.29" stroke="#fcfcfc" stroke-width="0.8"/><path d="M703.6 436.4a6.4 6.4 0 0 1 9.2 0M705.2 438.2a4.2 4.2 0 0 1 6 0M706.6 440a2.2 2.2 0 0 1 3.2 0" fill="none" stroke="#fcfcfc" stroke-width="0.9"/><circle cx="708.2" cy="441.8" r="0.8" fill="#fcfcfc"/><rect x="718" y="435.6" width="9" height="5.4" fill="none" stroke="#fcfcfc" stroke-width="0.8"/><rect x="718.8" y="436.4" width="3.2" height="3.8" fill="#fcfcfc"/><rect x="727.2" y="437.2" width="0.9" height="2.2" fill="#fcfcfc"/><path d="M734.8 440.4l3.4 -3.6l3.4 3.6" fill="none" stroke="#fcfcfc" stroke-width="0.9"/><rect x="784" y="434.900" width="8.400" height="7" fill="none" stroke="#fcfcfc" stroke-width="0.950"/><path d="M783.600 441.700h9.200" stroke="#fcfcfc" stroke-width="1.300"/>
</svg>
</body>
</html>
